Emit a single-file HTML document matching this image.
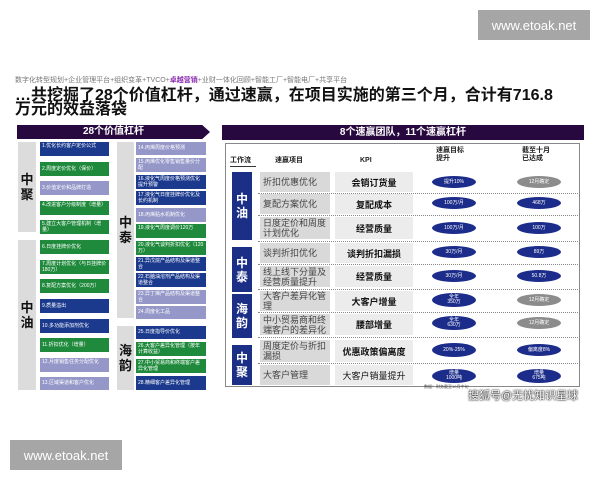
<!DOCTYPE html>
<html><head><meta charset="utf-8"><style>
*{margin:0;padding:0;box-sizing:border-box}
body{width:600px;height:480px;background:#fff;position:relative;overflow:hidden;font-family:"Liberation Sans","Noto Sans CJK SC",sans-serif}
.a{position:absolute}
.wm{background:#a6a6a6;color:#fff;font-size:13px;display:flex;align-items:center;justify-content:center}
.it{position:absolute;color:#fff;font-size:5px;line-height:6px;padding:1px 2px;overflow:hidden}
.b{background:#1b3a8e}.g{background:#1f8a3c}.l{background:#9497c8}
.gl{position:absolute;background:#dcdcdc;color:#111;font-weight:bold;font-size:13px;line-height:15px;display:flex;align-items:center;justify-content:center;text-align:center}
.bl{position:absolute;background:#1b2f86;color:#fff;font-weight:bold;font-size:12px;line-height:14px;display:flex;align-items:center;justify-content:center;text-align:center}
.pj{position:absolute;left:260px;width:70px;background:#d9d9d9;color:#444;font-size:9px;line-height:10px;padding-left:3px;display:flex;align-items:center}
.kp{position:absolute;left:335px;width:78px;background:#ececec;color:#111;font-weight:bold;font-size:9px;display:flex;align-items:center;justify-content:center}
.el{position:absolute;width:44px;height:12px;border-radius:50%;color:#fff;font-size:5px;line-height:5px;display:flex;align-items:center;justify-content:center;text-align:center}
.eb{background:#1c2c8a}.eg{background:#8c8c8c}
.sep{position:absolute;left:258px;width:320px;border-top:1px dotted #888}
.hd{position:absolute;font-size:7px;font-weight:bold;color:#222;line-height:8px}
</style></head><body>
<div class="a wm" style="left:478px;top:10px;width:112px;height:30px">www.etoak.net</div>
<div class="a wm" style="left:10px;top:440px;width:112px;height:30px">www.etoak.net</div>
<div class="a" style="left:15px;top:75px;font-size:7px;color:#777">数字化转型规划+企业管理平台+组织变革+TVCO+<b style="color:#8a2bb0">卓越营销</b>+业财一体化回顾+智能工厂+智能电厂+共享平台</div>
<div class="a" style="left:15px;top:89px;font-size:16px;font-weight:bold;color:#111;line-height:14px;width:560px">…共挖掘了28个价值杠杆，通过速赢，在项目实施的第三个月，合计有716.8<br>万元的效益落袋</div>
<div class="a" style="left:17px;top:125px;width:193px;height:14px;background:#28093f;color:#fff;font-size:10px;font-weight:bold;text-align:center;line-height:14px;clip-path:polygon(0 0,96% 0,100% 50%,96% 100%,0 100%)">28个价值杠杆</div>
<div class="a" style="left:222px;top:125px;width:362px;height:15px;background:#28093f;color:#fff;font-size:10px;font-weight:bold;text-align:center;line-height:15px">8个速赢团队，11个速赢杠杆</div>
<div class="gl" style="left:18px;top:142px;width:18px;height:90px">中<br>聚</div>
<div class="gl" style="left:18px;top:240px;width:18px;height:150px">中<br>油</div>
<div class="gl" style="left:117px;top:142px;width:17px;height:176px">中<br>泰</div>
<div class="gl" style="left:117px;top:326px;width:17px;height:64px">海<br>韵</div>
<div class="it b" style="left:40px;top:142px;width:69px;height:14px">1.优化长约客户定价公式</div>
<div class="it g" style="left:40px;top:162px;width:69px;height:14px;line-height:12px">2.周度定价优化（保价）</div>
<div class="it l" style="left:40px;top:181px;width:69px;height:14px;line-height:12px">3.价值定价和品牌打造</div>
<div class="it g" style="left:40px;top:201px;width:69px;height:14px">4.改进客户分级制度（增量）</div>
<div class="it g" style="left:40px;top:220px;width:69px;height:14px">5.建立大客户管理机制（增量）</div>
<div class="it g" style="left:40px;top:240px;width:69px;height:14px;line-height:12px">6.日度挂牌价优化</div>
<div class="it g" style="left:40px;top:260px;width:69px;height:14px">7.周度计划优化（与日挂牌价180万）</div>
<div class="it g" style="left:40px;top:279px;width:69px;height:14px;line-height:12px">8.复配方案优化（200万）</div>
<div class="it b" style="left:40px;top:299px;width:69px;height:14px;line-height:12px">9.质量溢出</div>
<div class="it b" style="left:40px;top:319px;width:69px;height:14px;line-height:12px">10.多功能添加剂优化</div>
<div class="it g" style="left:40px;top:338px;width:69px;height:14px;line-height:12px">11.折扣优化（增量）</div>
<div class="it l" style="left:40px;top:358px;width:69px;height:14px">12.月度销售任务分配优化</div>
<div class="it l" style="left:40px;top:377px;width:69px;height:13px;line-height:11px">13.区域渠道和客户优化</div>
<div class="it l" style="left:136px;top:142px;width:70px;height:13px;line-height:11px">14.丙烯周度价格预测</div>
<div class="it l" style="left:136px;top:158px;width:70px;height:14px">15.丙烯优化零售销售量价分配</div>
<div class="it b" style="left:136px;top:175px;width:70px;height:14px">16.液化气周度价格预测优化提升预警</div>
<div class="it b" style="left:136px;top:191px;width:70px;height:14px">17.液化气日度挂牌价优化及长约机制</div>
<div class="it l" style="left:136px;top:208px;width:70px;height:14px;line-height:12px">18.丙烯贴水机制优化</div>
<div class="it g" style="left:136px;top:224px;width:70px;height:14px">19.液化气周度调价120万</div>
<div class="it g" style="left:136px;top:241px;width:70px;height:14px">20.液化气谈判折扣优化（120万）</div>
<div class="it b" style="left:136px;top:257px;width:70px;height:14px">21.异戊烷产品结构及渠道整合</div>
<div class="it b" style="left:136px;top:273px;width:70px;height:14px">22.石脑油溶剂产品结构及渠道整合</div>
<div class="it l" style="left:136px;top:290px;width:70px;height:14px">23.异丁烯产品结构及渠道整合</div>
<div class="it l" style="left:136px;top:306px;width:70px;height:13px;line-height:11px">24.周度化工品</div>
<div class="it b" style="left:136px;top:326px;width:70px;height:13px;line-height:11px">25.日度指导价优化</div>
<div class="it g" style="left:136px;top:342px;width:70px;height:14px">26.大客户差异化管理（按年计算收益）</div>
<div class="it g" style="left:136px;top:359px;width:70px;height:14px">27.中小贸易商和终端客户差异化管理</div>
<div class="it b" style="left:136px;top:376px;width:70px;height:14px;line-height:12px">28.精细客户差异化管理</div>
<div class="a" style="left:225px;top:143px;width:355px;height:244px;border:1px solid #888"></div>
<div class="hd" style="left:230px;top:157px">工作流</div>
<div class="a" style="left:230px;top:166px;width:26px;border-top:1px solid #333"></div>
<div class="hd" style="left:275px;top:157px">速赢项目</div>
<div class="hd" style="left:360px;top:157px">KPI</div>
<div class="hd" style="left:436px;top:147px">速赢目标<br>提升</div>
<div class="hd" style="left:522px;top:147px">截至十月<br>已达成</div>
<div class="bl" style="left:232px;top:172px;width:20px;height:68px">中<br>油</div>
<div class="bl" style="left:232px;top:247px;width:20px;height:45px">中<br>泰</div>
<div class="bl" style="left:232px;top:294px;width:20px;height:44px">海<br>韵</div>
<div class="bl" style="left:232px;top:345px;width:20px;height:40px">中<br>聚</div>
<div class="pj" style="top:172px;height:20px">折扣优惠优化</div>
<div class="pj" style="top:194px;height:20px">复配方案优化</div>
<div class="pj" style="top:217px;height:22px">日度定价和周度计划优化</div>
<div class="pj" style="top:243px;height:20px">谈判折扣优化</div>
<div class="pj" style="top:266px;height:21px">线上线下分量及经营质量提升</div>
<div class="pj" style="top:291px;height:20px">大客户差异化管理</div>
<div class="pj" style="top:314px;height:21px">中小贸易商和终端客户的差异化</div>
<div class="pj" style="top:340px;height:22px">周度定价与折扣漏损</div>
<div class="pj" style="top:365px;height:20px">大客户管理</div>
<div class="kp" style="top:172px;height:20px">会销订货量</div>
<div class="kp" style="top:194px;height:20px">复配成本</div>
<div class="kp" style="top:217px;height:22px">经营质量</div>
<div class="kp" style="top:243px;height:20px">谈判折扣漏损</div>
<div class="kp" style="top:266px;height:21px">经营质量</div>
<div class="kp" style="top:291px;height:20px">大客户增量</div>
<div class="kp" style="top:314px;height:21px">腰部增量</div>
<div class="kp" style="top:340px;height:22px">优惠政策偏离度</div>
<div class="kp" style="top:365px;height:20px;font-weight:normal">大客户销量提升</div>
<div class="sep" style="top:193px"></div><div class="sep" style="top:215px"></div><div class="sep" style="top:241px"></div><div class="sep" style="top:264px"></div><div class="sep" style="top:289px"></div><div class="sep" style="top:312px"></div><div class="sep" style="top:337px"></div><div class="sep" style="top:363px"></div>
<div class="el eb" style="left:432px;top:176px">提升10%</div><div class="el eg" style="left:517px;top:176px">12月确定</div>
<div class="el eb" style="left:432px;top:197px">100万/月</div><div class="el eb" style="left:517px;top:197px">468万</div>
<div class="el eb" style="left:432px;top:222px">100万/月</div><div class="el eb" style="left:517px;top:222px">100万</div>
<div class="el eb" style="left:432px;top:246px">30万/月</div><div class="el eb" style="left:517px;top:246px">89万</div>
<div class="el eb" style="left:432px;top:270px">30万/月</div><div class="el eb" style="left:517px;top:270px">50.8万</div>
<div class="el eb" style="left:432px;top:293px;height:14px">全年<br>350万</div><div class="el eg" style="left:517px;top:294px">12月确定</div>
<div class="el eb" style="left:432px;top:316px;height:14px">全年<br>630万</div><div class="el eg" style="left:517px;top:317px">12月确定</div>
<div class="el eb" style="left:432px;top:343px;height:14px">20%-25%</div><div class="el eb" style="left:517px;top:344px">偏离度8%</div>
<div class="el eb" style="left:432px;top:369px;height:14px">增量<br>1000吨</div><div class="el eb" style="left:517px;top:369px;height:14px">增量<br>675吨</div>
<div class="a" style="left:424px;top:384px;font-size:4px;color:#444">数据：财务截至10月中旬</div>
<div class="a" style="left:468px;top:387px;font-size:11px;color:#fff;text-shadow:0 0 2px #000,0 0 1px #000">搜狐号@无忧知识星球</div>
</body></html>
